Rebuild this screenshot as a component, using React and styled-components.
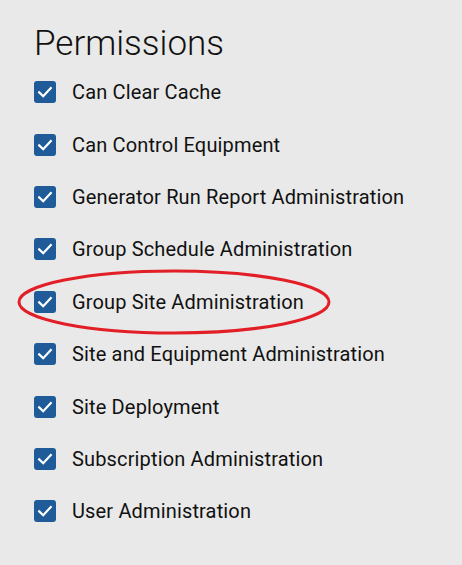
import React from "react";
import styled, { createGlobalStyle } from "styled-components";

const permissions = [
  "Can Clear Cache",
  "Can Control Equipment",
  "Generator Run Report Administration",
  "Group Schedule Administration",
  "Group Site Administration",
  "Site and Equipment Administration",
  "Site Deployment",
  "Subscription Administration",
  "User Administration",
];

function App() {
  return (
    <>
      <GlobalStyle />
      <Panel>
        <Title>Permissions</Title>
        <List>
          {permissions.map((name) => (
            <Row key={name}>
              <Check>
                <svg width="18" height="18" viewBox="0 0 18 18">
                  <path
                    d="M3.2 9.4 L7.2 13.2 L14.8 5"
                    fill="none"
                    stroke="#fff"
                    strokeWidth="2.2"
                    strokeLinecap="square"
                  />
                </svg>
              </Check>
              <Label>{name}</Label>
              {name === "Group Site Administration" && (
                <Circle viewBox="0 0 316 68" width="316" height="68">
                  <ellipse
                    cx="158"
                    cy="34"
                    rx="155"
                    ry="31"
                    fill="none"
                    stroke="#e21f26"
                    strokeWidth="3"
                  />
                </Circle>
              )}
            </Row>
          ))}
        </List>
      </Panel>
    </>
  );
}

const GlobalStyle = createGlobalStyle`
  html, body {
    margin: 0;
    padding: 0;
    background: #e9e9e9;
  }
  body {
    font-family: Roboto, "Liberation Sans", sans-serif;
    color: #111;
  }
`;

const Panel = styled.div`
  width: 462px;
  height: 565px;
  padding: 21px 0 0 34px;
  box-sizing: border-box;
`;

const Title = styled.h1`
  margin: 0;
  font-size: 35px;
  font-weight: 300;
  line-height: 45px;
  color: #111;
`;

const List = styled.div`
  display: flex;
  flex-direction: column;
`;

const Row = styled.div`
  position: relative;
  display: flex;
  align-items: center;
  height: 52.4px;
  gap: 16px;
`;

const Check = styled.span`
  display: flex;
  align-items: center;
  justify-content: center;
  width: 22px;
  height: 22px;
  border-radius: 3px;
  background: #1e5b98;
  flex-shrink: 0;
`;

const Label = styled.span`
  font-size: 20px;
  letter-spacing: 0.15px;
  line-height: 24px;
  color: #111;
`;

const Circle = styled.svg`
  position: absolute;
  left: -18px;
  top: -8px;
  pointer-events: none;
`;

export default App;
